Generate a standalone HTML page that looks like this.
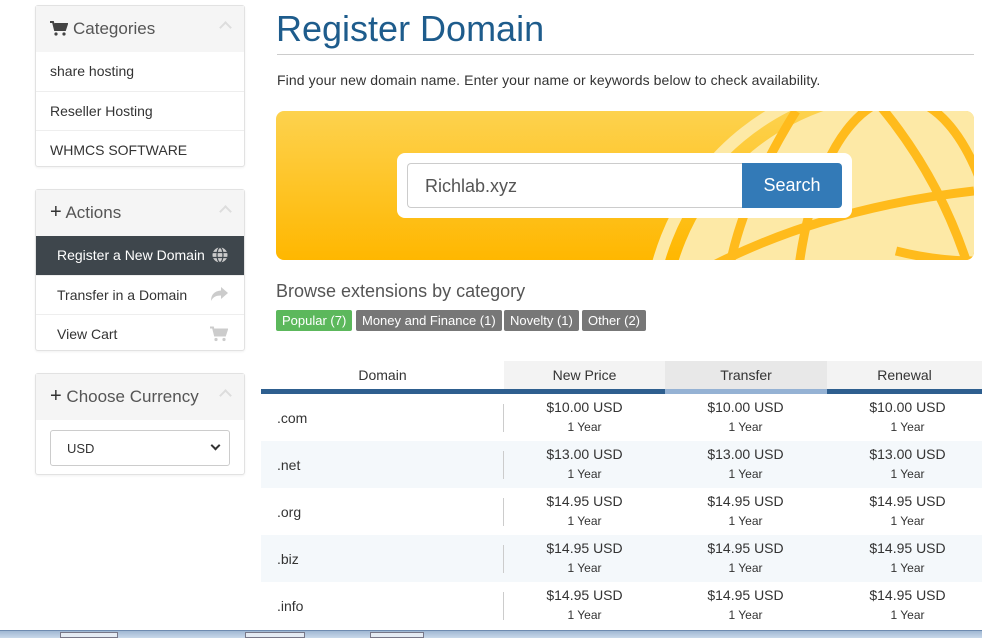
<!DOCTYPE html>
<html><head><meta charset="utf-8"><style>
*{box-sizing:border-box;margin:0;padding:0}
body{width:982px;height:638px;overflow:hidden;background:#fff;font-family:"Liberation Sans",sans-serif;color:#333;position:relative}
.abs{position:absolute}
.panel{position:absolute;left:35px;width:210px;border:1px solid #e2e2e2;border-radius:3px;background:#fff;box-shadow:0 1px 2px rgba(0,0,0,.06)}
.ph{height:46px;background:#f5f5f5;font-size:17px;color:#555;padding:13px 0 0 14px;position:relative}
.ph .car{position:absolute;right:14px;top:17px;width:9px;height:9px;border-left:2px solid #ddd;border-top:2px solid #ddd;transform:rotate(45deg)}
.it{height:39px;border-top:1px solid #eee;font-size:14px;padding:11px 0 0 14px;color:#333;position:relative}
.it.in{padding-left:21px}
.act{background:#3e464c;color:#fff}
.ic{position:absolute;right:16px;top:11px}
.th{position:absolute;top:361px;height:28px;font-size:14px;text-align:center;padding-top:6px;color:#333}
.row{position:absolute;left:261px;width:721px;height:47px}
.row .d{position:absolute;left:16px;top:16px;font-size:14px}
.row .sep{position:absolute;left:242px;top:10px;width:1px;height:28px;background:#ccc}
.row .p{position:absolute;top:5px;width:161px;text-align:center;font-size:14px;line-height:17px}
.row .p small{font-size:12px;display:block;margin-top:4px;line-height:14px}
.lab{position:absolute;top:310px;height:21px;font-size:13px;color:#fff;padding:3px 6px 0;border-radius:2px;background:#777}
</style></head><body>

<div class="panel" style="top:5px;height:162px">
 <div class="ph"><svg width="18" height="15" viewBox="0 0 18 15" style="vertical-align:-2px;margin-right:5px"><path d="M0 1h3l2 8h10l2-6H4.5" fill="none" stroke="#444" stroke-width="2"/><path d="M4 3h13l-2 6H5z" fill="#444"/><circle cx="6" cy="13" r="1.6" fill="#444"/><circle cx="14" cy="13" r="1.6" fill="#444"/></svg>Categories<span class="car"></span></div>
 <div class="it" style="border-top:none">share hosting</div>
 <div class="it">Reseller Hosting</div>
 <div class="it">WHMCS SOFTWARE</div>
</div>
<div class="panel" style="top:189px;height:162px">
 <div class="ph"><span style="color:#333;font-size:20px;line-height:17px">+</span> Actions<span class="car"></span></div>
 <div class="it in act" style="border-top:none">Register a New Domain<svg class="ic" width="16" height="16" viewBox="0 0 16 16"><circle cx="8" cy="8" r="7.5" fill="#ccc"/><g stroke="#3e464c" stroke-width="1.2" fill="none"><ellipse cx="8" cy="8" rx="3" ry="7.5"/><path d="M0.5 5.5h15M0.5 10.5h15"/></g></svg></div>
 <div class="it in">Transfer in a Domain<svg class="ic" width="17" height="14" viewBox="0 0 17 14"><path d="M10 0l7 6-7 6V8.5C5 8.5 2 10 0 14 0 8 3 4 10 3.5z" fill="#ccc"/></svg></div>
 <div class="it in">View Cart<svg class="ic" width="18" height="16" viewBox="0 0 18 15"><path d="M0 1h3l2 8h10l2-6H4.5" fill="none" stroke="#ccc" stroke-width="2"/><path d="M4 3h13l-2 6H5z" fill="#ccc"/><circle cx="6" cy="13" r="1.6" fill="#ccc"/><circle cx="14" cy="13" r="1.6" fill="#ccc"/></svg></div>
</div>
<div class="panel" style="top:373px;height:102px">
 <div class="ph"><span style="color:#333;font-size:20px;line-height:17px">+</span> Choose Currency<span class="car"></span></div>
 <div class="abs" style="left:14px;top:56px;width:180px;height:36px;border:1px solid #ccc;border-radius:3px;font-size:13px;padding:10px 0 0 16px">USD<span style="position:absolute;right:10px;top:11px;width:7px;height:7px;border-right:2px solid #333;border-bottom:2px solid #333;transform:rotate(45deg)"></span></div>
</div>

<div class="abs" style="left:276px;top:8px;font-size:36px;color:#1e5c8c">Register Domain</div>
<div class="abs" style="left:277px;top:54px;width:697px;height:1px;background:#ccc"></div>
<div class="abs" style="left:277px;top:72px;font-size:14px;color:#333;letter-spacing:0.1px">Find your new domain name. Enter your name or keywords below to check availability.</div>

<div class="abs" style="left:276px;top:111px;width:698px;height:149px;border-radius:8px;overflow:hidden;background:linear-gradient(#fdd24e,#ffb700)">
 <svg width="698" height="149" style="position:absolute;left:0;top:0">
  <circle cx="624" cy="219" r="251" fill="none" stroke="#fde9a6" stroke-width="12"/>
  <circle cx="624" cy="219" r="232" fill="#fde9a6"/>
  <g fill="none" stroke="#ffbb1c" stroke-width="9">
   <ellipse cx="624" cy="219" rx="105" ry="232"/>
   <path d="M520 0 Q470 80 455 149"/>
   <path d="M600 -10 Q660 60 690 149"/>
   <path d="M392 180 Q520 100 698 80"/>
   <path d="M380 260 Q540 210 698 190"/>
   <path d="M620 140 Q660 150 698 150"/>
  </g>
 </svg>
 <div class="abs" style="left:121px;top:42px;width:455px;height:65px;background:#fff;border-radius:8px"></div>
 <div class="abs" style="left:131px;top:52px;width:336px;height:45px;border:1px solid #ccc;border-right:none;border-radius:4px 0 0 4px;background:#fff;font-size:18px;color:#555;padding:12px 0 0 17px">Richlab.xyz</div>
 <div class="abs" style="left:466px;top:52px;width:100px;height:45px;background:#337ab7;border-radius:0 4px 4px 0;color:#fff;font-size:18px;text-align:center;padding-top:12px">Search</div>
</div>

<div class="abs" style="left:276px;top:281px;font-size:18px;color:#555">Browse extensions by category</div>
<div class="lab" style="left:276px;background:#5cb85c">Popular (7)</div>
<div class="lab" style="left:356px">Money and Finance (1)</div>
<div class="lab" style="left:504px">Novelty (1)</div>
<div class="lab" style="left:582px">Other (2)</div>

<div class="th" style="left:261px;width:243px">Domain</div>
<div class="th" style="left:504px;width:161px;background:#f3f3f3">New Price</div>
<div class="th" style="left:665px;width:162px;background:#e8e8e8">Transfer</div>
<div class="th" style="left:827px;width:155px;background:#f3f3f3">Renewal</div>
<div class="abs" style="left:261px;top:389px;width:721px;height:5px;background:#2e5f8f"></div>
<div class="abs" style="left:665px;top:389px;width:162px;height:5px;background:#95b2d4"></div>

<div class="row" style="top:394px"><div class="d">.com</div><div class="sep"></div><div class="p" style="left:243px">$10.00 USD<small>1 Year</small></div><div class="p" style="left:404px">$10.00 USD<small>1 Year</small></div><div class="p" style="left:566px">$10.00 USD<small>1 Year</small></div></div>
<div class="row" style="top:441px;background:#f4f8fb"><div class="d">.net</div><div class="sep"></div><div class="p" style="left:243px">$13.00 USD<small>1 Year</small></div><div class="p" style="left:404px">$13.00 USD<small>1 Year</small></div><div class="p" style="left:566px">$13.00 USD<small>1 Year</small></div></div>
<div class="row" style="top:488px"><div class="d">.org</div><div class="sep"></div><div class="p" style="left:243px">$14.95 USD<small>1 Year</small></div><div class="p" style="left:404px">$14.95 USD<small>1 Year</small></div><div class="p" style="left:566px">$14.95 USD<small>1 Year</small></div></div>
<div class="row" style="top:535px;background:#f4f8fb"><div class="d">.biz</div><div class="sep"></div><div class="p" style="left:243px">$14.95 USD<small>1 Year</small></div><div class="p" style="left:404px">$14.95 USD<small>1 Year</small></div><div class="p" style="left:566px">$14.95 USD<small>1 Year</small></div></div>
<div class="row" style="top:582px"><div class="d">.info</div><div class="sep"></div><div class="p" style="left:243px">$14.95 USD<small>1 Year</small></div><div class="p" style="left:404px">$14.95 USD<small>1 Year</small></div><div class="p" style="left:566px">$14.95 USD<small>1 Year</small></div></div>

<div class="abs" style="left:0;top:630px;width:982px;height:8px;background:linear-gradient(#9fb7d3,#c8d8ea);border-top:1px solid #6e8bb0"></div>
<div class="abs" style="left:60px;top:632px;width:58px;height:6px;background:#e4ebf3;border:1px solid #778"></div>
<div class="abs" style="left:245px;top:632px;width:60px;height:6px;background:#e4ebf3;border:1px solid #778"></div>
<div class="abs" style="left:370px;top:632px;width:54px;height:6px;background:#e4ebf3;border:1px solid #778"></div>
</body></html>
